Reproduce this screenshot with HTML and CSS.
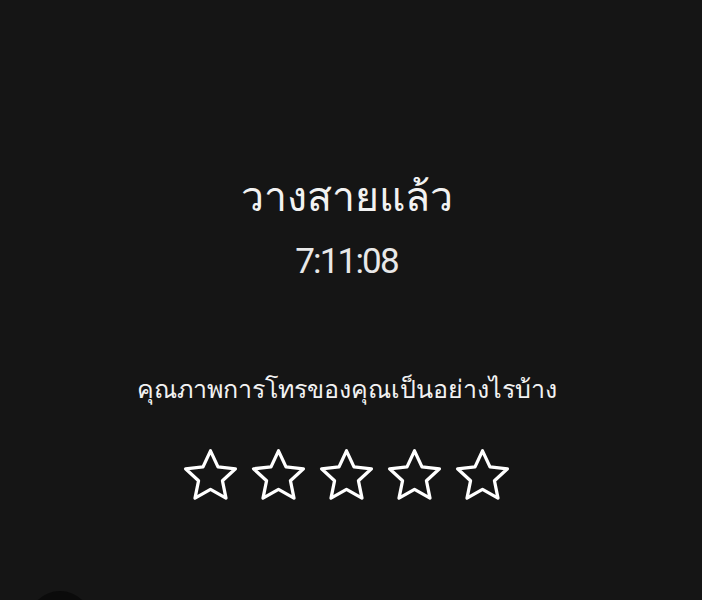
FILE: index.html
```html
<!DOCTYPE html>
<html lang="th">
<head>
<meta charset="utf-8">
<link rel="stylesheet" href="styles.css">
</head>
<body>
<main class="screen">
  <section class="status">
    <h1 class="title">วางสายแล้ว</h1>
    <div class="time">7:11:08</div>
  </section>
  <section class="rating">
    <p class="question">คุณภาพการโทรของคุณเป็นอย่างไรบ้าง</p>
    <div class="stars">
      <svg class="star" viewBox="0 0 24 24"><path d="M12 2.6l2.85 6.1 6.65.75-4.95 4.55 1.35 6.6L12 17.3l-5.9 3.3 1.35-6.6L2.5 9.45l6.65-.75z"/></svg>
      <svg class="star" viewBox="0 0 24 24"><path d="M12 2.6l2.85 6.1 6.65.75-4.95 4.55 1.35 6.6L12 17.3l-5.9 3.3 1.35-6.6L2.5 9.45l6.65-.75z"/></svg>
      <svg class="star" viewBox="0 0 24 24"><path d="M12 2.6l2.85 6.1 6.65.75-4.95 4.55 1.35 6.6L12 17.3l-5.9 3.3 1.35-6.6L2.5 9.45l6.65-.75z"/></svg>
      <svg class="star" viewBox="0 0 24 24"><path d="M12 2.6l2.85 6.1 6.65.75-4.95 4.55 1.35 6.6L12 17.3l-5.9 3.3 1.35-6.6L2.5 9.45l6.65-.75z"/></svg>
      <svg class="star" viewBox="0 0 24 24"><path d="M12 2.6l2.85 6.1 6.65.75-4.95 4.55 1.35 6.6L12 17.3l-5.9 3.3 1.35-6.6L2.5 9.45l6.65-.75z"/></svg>
    </div>
  </section>
  <div class="corner"></div>
</main>
</body>
</html>
```
FILE: styles.css
```css
html, body {
  margin: 0;
  padding: 0;
  background: #151515;
}
.screen {
  position: relative;
  box-sizing: border-box;
  width: 702px;
  height: 600px;
  padding-right: 9px;
  overflow: hidden;
  background: #151515;
  color: #f2f2f2;
  font-family: "Noto Sans", "DejaVu Sans", sans-serif;
  display: flex;
  flex-direction: column;
  align-items: center;
}
.status {
  display: flex;
  flex-direction: column;
  align-items: center;
  padding-top: 167px;
}
.title {
  margin: 0;
  font-size: 41px;
  font-weight: 400;
  line-height: 56px;
}
.time {
  margin-top: 19px;
  font-family: Roboto, "Liberation Sans", sans-serif;
  font-weight: 400;
  font-size: 35px;
  line-height: 40px;
  letter-spacing: -1.8px;
  color: #e8e8e8;
}
.rating {
  display: flex;
  flex-direction: column;
  align-items: center;
  padding-top: 89px;
}
.question {
  margin: 0;
  font-size: 25px;
  line-height: 34px;
}
.stars {
  display: flex;
  gap: 5px;
  margin-top: 39px;
}
.star {
  width: 63px;
  height: 63px;
  fill: none;
  stroke: #fff;
  stroke-width: 1.25;
  stroke-linejoin: round;
}
.corner {
  position: absolute;
  left: 28px;
  top: 591px;
  width: 64px;
  height: 64px;
  border-radius: 50%;
  background: #0b0b0b;
}
```
